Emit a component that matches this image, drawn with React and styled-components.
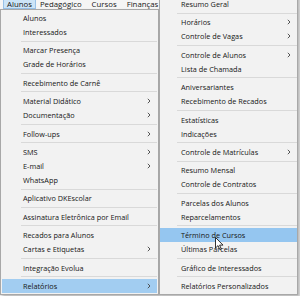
import React from "react";
import styled, { createGlobalStyle } from "styled-components";

const GlobalStyle = createGlobalStyle`
  html, body {
    margin: 0;
    padding: 0;
    background: #ffffff;
  }
  body {
    font-family: "Open Sans", "Noto Sans", sans-serif;
    color: #151515;
  }
`;

const Screen = styled.div`
  position: relative;
  width: 300px;
  height: 296px;
  overflow: hidden;
  background: #f3f3f3;
`;

const MenuBar = styled.div`
  display: flex;
  height: 9px;
  padding-left: 3px;
  background: #f5f5f5;
  overflow: hidden;
`;

const BarItem = styled.div`
  box-sizing: border-box;
  height: 12px;
  margin-top: -3px;
  padding: 0 ${(p) => p.$pad}px 0 3px;
  font-size: 7.8px;
  line-height: 12px;
  white-space: nowrap;
  background: ${(p) => (p.$open ? "#cce4f7" : "transparent")};
  border: 1px solid ${(p) => (p.$open ? "#99c2e8" : "transparent")};
`;

const Dropdown = styled.div`
  position: relative;
  box-sizing: border-box;
  width: 159px;
  padding: 1px;
  background: #f2f2f2;
  border: 1px solid #a8a8a8;
  box-shadow: 2px 2px 3px rgba(0, 0, 0, 0.25);
`;

const SubMenu = styled(Dropdown)`
  position: absolute;
  left: 158px;
  top: -15px;
  width: 139px;
  padding: 1px 0;
`;

const Item = styled.div`
  display: flex;
  align-items: center;
  justify-content: space-between;
  height: 14px;
  padding: 0 6px 0 ${(p) => p.$indent}px;
  font-size: 7.3px;
  white-space: nowrap;
  background: ${(p) => (p.$hot ? p.$hot : "transparent")};
`;

const Separator = styled.div`
  display: flex;
  align-items: center;
  height: 4.4px;
  margin-left: ${(p) => p.$indent}px;

  &::after {
    content: "";
    flex: 1;
    height: 1px;
    background: #d9d9d9;
  }
`;

const Cursor = styled.svg`
  position: absolute;
  left: 215px;
  top: 237px;
`;

const leftItems = [
  "Alunos",
  "Interessados",
  "-",
  "Marcar Presença",
  "Grade de Horários",
  "-",
  "Recebimento de Carnê",
  "-",
  "Material Didático>",
  "Documentação>",
  "-",
  "Follow-ups>",
  "-",
  "SMS>",
  "E-mail>",
  "WhatsApp",
  "-",
  "Aplicativo DKEscolar",
  "-",
  "Assinatura Eletrônica por Email",
  "-",
  "Recados para Alunos",
  "Cartas e Etiquetas>",
  "-",
  "Integração Evolua",
  "-",
  "Relatórios>",
];

const rightItems = [
  "Resumo Geral",
  "-",
  "Horários>",
  "Controle de Vagas>",
  "-",
  "Controle de Alunos>",
  "Lista de Chamada",
  "-",
  "Aniversariantes",
  "Recebimento de Recados",
  "-",
  "Estatísticas",
  "Indicações",
  "-",
  "Controle de Matrículas>",
  "-",
  "Resumo Mensal",
  "Controle de Contratos",
  "-",
  "Parcelas dos Alunos",
  "Reparcelamentos",
  "-",
  "Término de Cursos",
  "Últimas Parcelas",
  "-",
  "Gráfico de Interessados",
  "-",
  "Relatórios Personalizados",
];

const Arrow = () => (
  <svg width="4" height="6" viewBox="0 0 4 6">
    <path d="M0.8 0.8 L3 3 L0.8 5.2" fill="none" stroke="#444" strokeWidth="0.9" />
  </svg>
);

const MenuList = ({ items, indent, sepIndent, hot, hotColor }) =>
  items.map((entry, i) => {
    if (entry === "-") return <Separator key={i} $indent={sepIndent} />;
    const hasArrow = entry.endsWith(">");
    const label = hasArrow ? entry.slice(0, -1) : entry;
    return (
      <Item key={i} $indent={indent} $hot={label === hot ? hotColor : null}>
        <span>{label}</span>
        {hasArrow && <Arrow />}
      </Item>
    );
  });

export default function App() {
  return (
    <Screen>
      <GlobalStyle />
      <MenuBar>
        <BarItem $open $pad={3}>Alunos</BarItem>
        <BarItem $pad={5}>Pedagógico</BarItem>
        <BarItem $pad={5}>Cursos</BarItem>
        <BarItem $pad={5}>Finanças</BarItem>
      </MenuBar>
      <Dropdown>
        <MenuList items={leftItems} indent={21} sepIndent={19} hot="Relatórios" hotColor="#a2cdf1" />
        <SubMenu>
          <MenuList items={rightItems} indent={21} sepIndent={17} hot="Término de Cursos" hotColor="#95c6f0" />
        </SubMenu>
      </Dropdown>
      <Cursor width="9" height="14" viewBox="0 0 9 14">
        <path d="M0.5 0.5 L0.5 11 L3 8.6 L4.8 12.6 L6.3 12 L4.6 8.1 L8 8.1 Z" fill="#fff" stroke="#000" strokeWidth="0.8" />
      </Cursor>
    </Screen>
  );
}
